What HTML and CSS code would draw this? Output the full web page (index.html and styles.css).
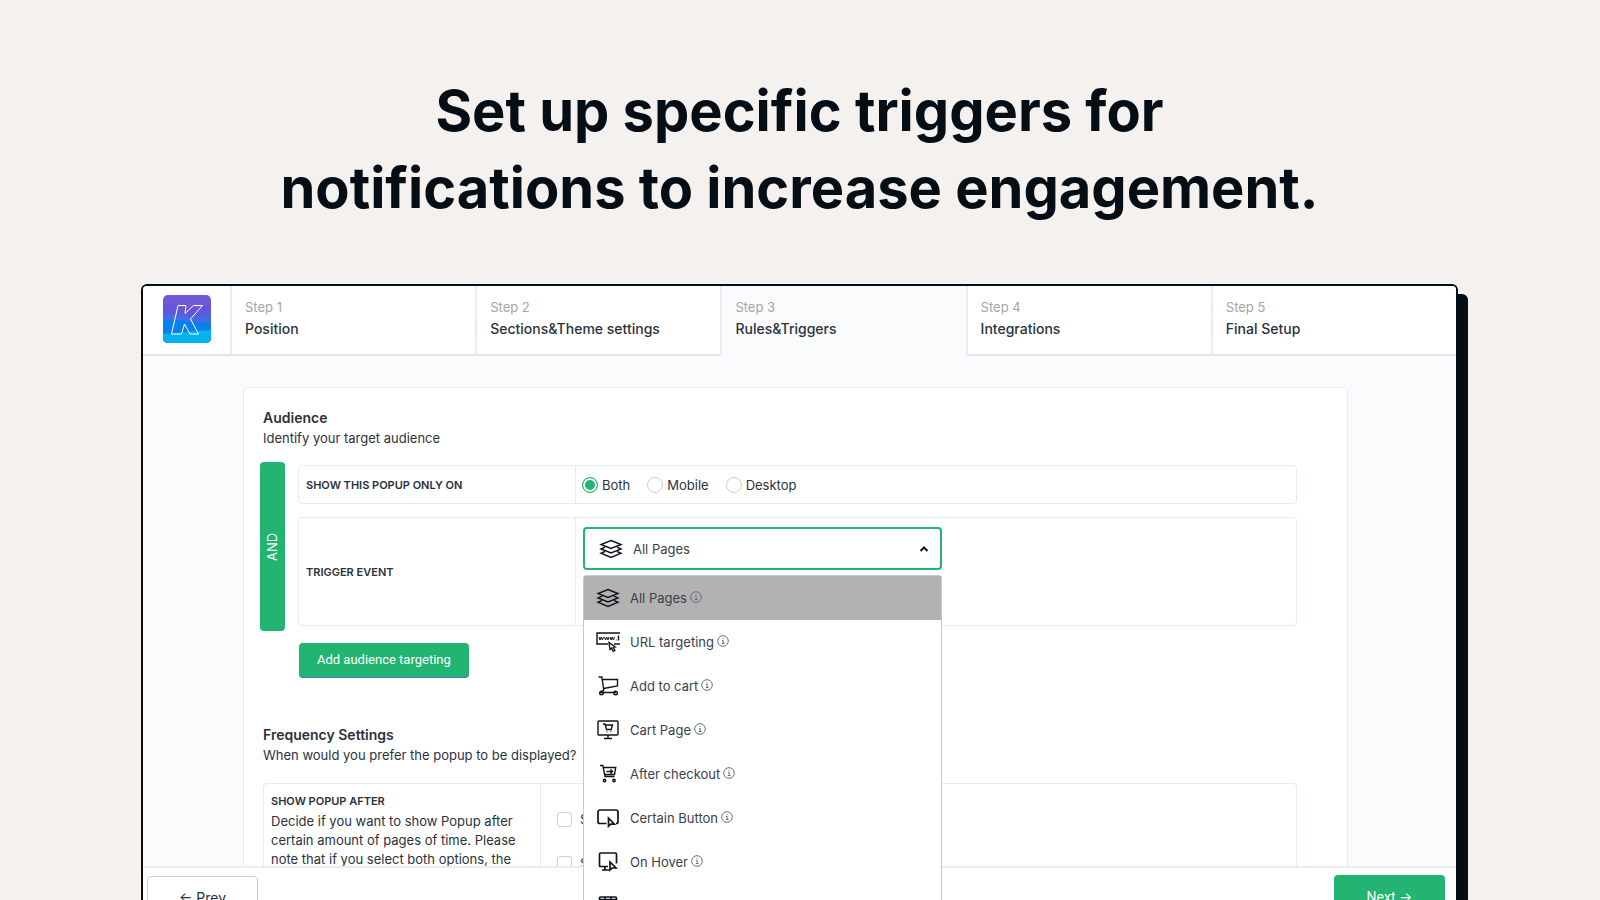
FILE: index.html
```html
<!DOCTYPE html>
<html lang="en">

<head>
    <meta charset="UTF-8">
    <meta name="viewport" content="width=device-width, initial-scale=1.0">
    <title>Rules &amp; Triggers</title>
    <link rel="stylesheet" href="styles.css">
</head>

<body>
    <!-- shared icons -->
    <svg class="sprite" aria-hidden="true">
        <symbol id="icon-layers" viewBox="0 0 24 24">
            <path d="M12 3.5 22 7.5 12 11.5 2 7.5z" />
            <path d="M6 10.2 2 12l10 4 10-4-4-1.800" />
            <path d="M6 14.500 2 16.200l10 4.300 10-4.300-4-1.700" />
        </symbol>
        <symbol id="icon-url" viewBox="0 0 24 24">
            <path d="M24 3H1v11h11M18 14h6M22.500 5.500v5" />
            <path stroke-width="1" d="M3 7l1 3 1.200-3 1.200 3L7.500 7M8.500 7l1 3 1.200-3 1.200 3L13 7M14 7l1 3 1.200-3 1.200 3L18.500 7M19.800 10h.8" />
            <path fill="#fff" d="M13 12.500l1 7 1.600-1.300 1.600 3.200 1.700-.9-1.600-3.100 1.900-.4z" />
        </symbol>
        <symbol id="icon-cart" viewBox="0 0 24 24">
            <path d="M2.500 3h3.300l2 13L5 18.500h15M6.300 5.500H21.500V12L7.500 14.500" />
            <circle cx="5.500" cy="19" r="1.800" />
            <circle cx="19.500" cy="19" r="1.800" />
        </symbol>
        <symbol id="icon-cart-page" viewBox="0 0 24 24">
            <rect x="2" y="3" width="20" height="14" rx="1" />
            <path d="M12 17v3.500M8 20.500h8M7 6h2l1.500 5.500h4.700L16.500 7H9.300" />
            <path d="M10.500 13.500h.8M14.500 13.500h.8" />
        </symbol>
        <symbol id="icon-checkout" viewBox="0 0 24 24">
            <path d="M4 3.500h2.800L9 14.500h9.500M7.200 5.500H19.700l-1.200 7H8.600M10.500 9.500h6M14.500 7.500l2 2-2 2" />
            <circle cx="8.500" cy="18.500" r="1.200" />
            <circle cx="18" cy="18.500" r="1.200" />
        </symbol>
        <symbol id="icon-button" viewBox="0 0 24 24">
            <path d="M10.500 17.500H4a2 2 0 0 1-2-2V6a2 2 0 0 1 2-2h16a2 2 0 0 1 2 2v9.500a2 2 0 0 1-2 2" />
            <path d="M12.500 12v8.300l2.200-2.200h3.700z" />
        </symbol>
        <symbol id="icon-hover" viewBox="0 0 24 24">
            <path d="M12 16.500H4.500a1 1 0 0 1-1-1V4a1 1 0 0 1 1-1h15a1 1 0 0 1 1 1v9.500M9 16.500V20M6 20h7" />
            <path d="M14 12v8l2-2h4z" />
        </symbol>
        <symbol id="icon-scroll" viewBox="0 0 24 24">
            <rect x="3.500" y="3" width="17" height="18" rx="1" />
            <path d="M3.500 5.500h17M9 3v4M15 3v4" />
        </symbol>
        <symbol id="icon-info" viewBox="0 0 12 12">
            <circle cx="6" cy="6" r="5.300" />
            <path d="M5 5.500h1.200v2.700M4.800 8.500h2.800M6 3.200v.9" />
        </symbol>
    </svg>

    <div class="showcase">
        <h1>Set up specific triggers for<br>notifications to increase engagement.</h1>

        <div class="window">
            <nav class="steps">
                <a class="logo" href="#" aria-label="Home">
                    <svg viewBox="0 0 48 48">
                        <path fill="#7259d6" d="M0 0h48v48H0z" />
                        <path fill="#6256dc" d="M0 9q10 0 20 3t28-3v39H0z" />
                        <path fill="#4a69e4" d="M0 20q12-2 24 0t24-2v30H0z" />
                        <path fill="#0a80ee" d="M0 25q14-1 24 1t24 1v21H0z" />
                        <path fill="#05b2ee" d="M0 39q12-1 24-2t24-2v13H0z" />
                        <path fill="none" stroke="#fff" d="M15 10.500h8l-1 8 8.500-8h9L27.500 24l8 15h-8.500l-5.500-10-3 10H8.500z" />
                    </svg>
                </a>
                <a class="step" href="#"><small>Step 1</small>Position</a>
                <a class="step" href="#"><small>Step 2</small>Sections&amp;Theme settings</a>
                <a class="step active" href="#"><small>Step 3</small>Rules&amp;Triggers</a>
                <a class="step" href="#"><small>Step 4</small>Integrations</a>
                <a class="step" href="#"><small>Step 5</small>Final Setup</a>
            </nav>

            <main class="content">
                <form class="card">
                    <h2>Audience</h2>
                    <p>Identify your target audience</p>

                    <div class="audience">
                        <div class="operator">AND</div>
                        <div class="rules">
                            <div class="rule">
                                <div class="rule-name">Show this popup only on</div>
                                <div class="rule-value">
                                    <label><input type="radio" name="device" checked>Both</label>
                                    <label><input type="radio" name="device">Mobile</label>
                                    <label><input type="radio" name="device">Desktop</label>
                                </div>
                            </div>
                            <div class="rule rule-trigger">
                                <label class="rule-name" for="trigger">Trigger event</label>
                                <div class="rule-value">
                                    <div class="dropdown">
                                        <select id="trigger">
                                            <option>All Pages</option>
                                            <option>URL targeting</option>
                                            <option>Add to cart</option>
                                            <option>Cart Page</option>
                                            <option>After checkout</option>
                                            <option>Certain Button</option>
                                            <option>On Hover</option>
                                        </select>
                                        <svg class="icon current"><use href="#icon-layers" /></svg>
                                        <svg class="chevron" viewBox="0 0 10 10"><path d="M1.500 7 5 3.500 8.500 7" /></svg>
                                        <ul class="menu">
                                            <li class="selected"><svg class="icon"><use href="#icon-layers" /></svg>All Pages<svg class="info"><use href="#icon-info" /></svg></li>
                                            <li><svg class="icon"><use href="#icon-url" /></svg>URL targeting<svg class="info"><use href="#icon-info" /></svg></li>
                                            <li><svg class="icon"><use href="#icon-cart" /></svg>Add to cart<svg class="info"><use href="#icon-info" /></svg></li>
                                            <li><svg class="icon"><use href="#icon-cart-page" /></svg>Cart Page<svg class="info"><use href="#icon-info" /></svg></li>
                                            <li><svg class="icon"><use href="#icon-checkout" /></svg>After checkout<svg class="info"><use href="#icon-info" /></svg></li>
                                            <li><svg class="icon bold"><use href="#icon-button" /></svg>Certain Button<svg class="info"><use href="#icon-info" /></svg></li>
                                            <li><svg class="icon bold"><use href="#icon-hover" /></svg>On Hover<svg class="info"><use href="#icon-info" /></svg></li>
                                            <li><svg class="icon bold"><use href="#icon-scroll" /></svg></li>
                                        </ul>
                                    </div>
                                </div>
                            </div>
                        </div>
                    </div>
                    <button type="button" class="add-btn">Add audience targeting</button>

                    <h2>Frequency Settings</h2>
                    <p>When would you prefer the popup to be displayed?</p>

                    <div class="frequency">
                        <div class="frequency-text">
                            <div class="rule-name">Show popup after</div>
                            <p>Decide if you want to show Popup after certain amount of pages of time. Please note that if you select both options, the</p>
                        </div>
                        <div class="frequency-options">
                            <label><input type="checkbox">S</label>
                            <label><input type="checkbox">S</label>
                        </div>
                    </div>
                </form>
            </main>

            <footer>
                <button type="button" class="prev-btn">← Prev</button>
                <button type="button" class="next-btn">Next →</button>
            </footer>
        </div>
    </div>
</body>

</html>
```
FILE: styles.css
```css
* {
    box-sizing: border-box;
}

body {
    margin: 0;
    background-color: #f5f1ee;
    color: #2b323c;
    font-family: Inter, sans-serif;
    font-size: 13px;
    line-height: 18px;
}

h1,
h2,
p,
ul {
    margin: 0;
    padding: 0;
}

a {
    color: inherit;
    text-decoration: none;
}

button,
select {
    font: inherit;
    cursor: pointer;
}

svg {
    display: block;
    flex: none;
}

.sprite {
    display: none;
}

.showcase {
    height: 100vh;
    padding: 73px 142px 0 141px;
    display: flex;
    flex-direction: column;
    overflow: hidden;
}

h1 {
    margin-bottom: 57px;
    color: #050d15;
    font-size: 56px;
    font-weight: 700;
    line-height: 77px;
    text-align: center;
}

.window {
    flex: 1;
    min-height: 0;
    display: flex;
    flex-direction: column;
    overflow: hidden;
    background-color: #fafbfd;
    border: 2px solid #050d15;
    border-bottom: none;
    border-radius: 6px 6px 0 0;
    box-shadow: 10px 10px 0 #050d15;
}

/* Steps */
.steps {
    display: flex;
    height: 70px;
}

.logo,
.step {
    background-color: #fff;
    border-bottom: 2px solid #e3e4ea;
}

.logo {
    width: 87px;
    padding: 9px 19px 9px 20px;
}

.logo svg {
    width: 48px;
    height: 48px;
    border-radius: 5px;
}

.step {
    flex: 1;
    padding: 12px 13px;
    border-left: 2px solid #e8ebf2;
    font-size: 14px;
    font-weight: 500;
    line-height: 26px;
}

.step small {
    display: block;
    color: #a3a5ab;
    font-size: 13px;
    font-weight: 400;
    line-height: 18px;
}

.step.active {
    background-color: #fafbfd;
    border-bottom-color: #fafbfd;
}

/* Card */
.content {
    flex: 1;
    min-height: 0;
    padding: 31px 108px 0 100px;
}

.card {
    padding: 19px 50px 40px 19px;
    background-color: #fff;
    border: 1px solid #e6ebf3;
    border-radius: 6px;
}

h2 {
    font-size: 14px;
    font-weight: 600;
    line-height: 22px;
}

.audience {
    display: flex;
    gap: 13px;
    margin: 15px 0 12px -3px;
}

.operator {
    width: 25px;
    background-color: #22b470;
    border-radius: 4px;
    color: #fff;
    line-height: 25px;
    text-align: center;
    writing-mode: vertical-rl;
    transform: rotate(180deg);
}

.rules {
    flex: 1;
    display: flex;
    flex-direction: column;
    gap: 13px;
    padding: 3px 0 5px;
}

.rule {
    display: flex;
    height: 39px;
    border: 1px solid #e6ebf3;
    border-radius: 4px;
}

.rule-trigger {
    height: 109px;
}

.rule-name {
    font-size: 11px;
    font-weight: 600;
    text-transform: uppercase;
}

.rule > .rule-name {
    width: 277px;
    padding-left: 7px;
    display: flex;
    align-items: center;
    border-right: 1px solid #e6ebf3;
}

.rule-value {
    display: flex;
    align-items: center;
    gap: 17px;
    padding-left: 6px;
}

.rule-trigger .rule-value {
    align-items: flex-start;
    padding: 9px 7px;
}

.rule-value label,
.frequency-options label {
    display: flex;
    align-items: center;
    gap: 4px;
}

input[type="radio"] {
    appearance: none;
    width: 16px;
    height: 16px;
    margin: 0;
    border: 1px solid #c9cdd4;
    border-radius: 50%;
}

input[type="radio"]:checked {
    border-color: #22b470;
    background-color: #22b470;
    box-shadow: inset 0 0 0 2px #fff;
}

/* Trigger dropdown */
.dropdown {
    position: relative;
    width: 359px;
}

.dropdown select {
    appearance: none;
    display: block;
    width: 100%;
    height: 43px;
    padding: 0 48px;
    background-color: #fff;
    border: 2px solid #22b470;
    border-radius: 4px;
    color: #3a414b;
    outline: none;
}

.icon {
    width: 24px;
    height: 24px;
    fill: none;
    stroke: #10151d;
    stroke-width: 1.4;
}

.icon.bold {
    stroke-width: 1.7;
}

.current {
    position: absolute;
    top: 10px;
    left: 16px;
}

.chevron {
    position: absolute;
    top: 17px;
    right: 13px;
    width: 10px;
    height: 10px;
    fill: none;
    stroke: #10151d;
    stroke-width: 2;
}

.menu {
    position: absolute;
    z-index: 2;
    top: 48px;
    left: 0;
    width: 100%;
    list-style-type: none;
    background-color: #fff;
    border: 1px solid #c8c9cb;
    border-radius: 3px;
}

.menu li {
    display: flex;
    align-items: center;
    height: 44px;
    padding-left: 12px;
    color: #3a414b;
}

.menu li.selected {
    background-color: #b2b2b2;
}

.menu .icon {
    margin-right: 10px;
}

.info {
    width: 12px;
    height: 12px;
    margin: 0 0 2px 3px;
    fill: none;
    stroke: #6a6f78;
}

.add-btn {
    display: block;
    height: 35px;
    margin: 0 0 46px 36px;
    padding: 0 18px;
    background-color: #22b470;
    border: none;
    border-bottom: 1px solid #4a74d0;
    border-radius: 4px;
    color: #fff;
    font-family: Roboto, sans-serif;
}

/* Frequency */
.frequency {
    display: flex;
    margin-top: 19px;
    border: 1px solid #e6ebf3;
    border-radius: 4px;
}

.frequency-text {
    width: 277px;
    padding: 8px 7px;
    border-right: 1px solid #e6ebf3;
}

.frequency-text p {
    margin-top: 2px;
    line-height: 19px;
}

.frequency-options {
    display: flex;
    flex-direction: column;
    gap: 26px;
    padding: 26px 16px;
}

.frequency-options label {
    gap: 8px;
}

input[type="checkbox"] {
    appearance: none;
    width: 15px;
    height: 15px;
    margin: 0;
    background-color: #fff;
    border: 1px solid #cdd2da;
    border-radius: 3px;
}

/* Bottom bar, cut off by the lower edge of the page */
footer {
    position: relative;
    z-index: 1;
    flex: 0 0 34px;
    display: flex;
    justify-content: space-between;
    padding: 7px 11px 0 4px;
    overflow: hidden;
    background-color: #fff;
    border-top: 2px solid #ebedf1;
}

footer button {
    width: 111px;
    height: 44px;
    border-radius: 4px;
    font-size: 14px;
}

.prev-btn {
    margin-top: 1px;
    background-color: #fff;
    border: 1px solid #c9ced6;
    color: #2b323c;
}

.next-btn {
    background-color: #22b470;
    border: none;
    color: #fff;
    font-family: Roboto, Inter, sans-serif;
}
```
